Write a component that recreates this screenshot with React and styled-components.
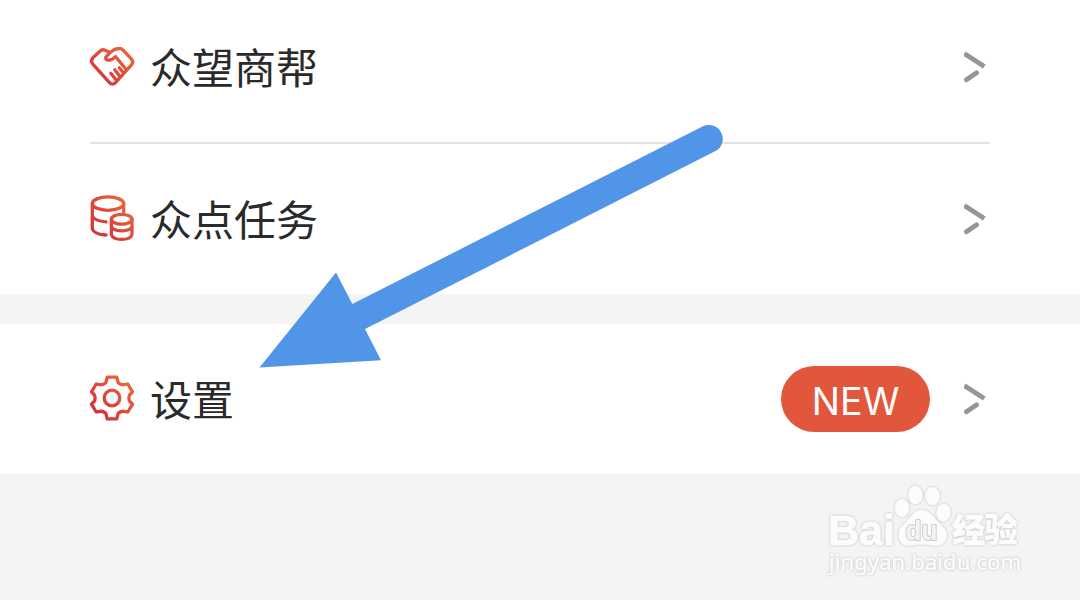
import React from 'react';
import styled, { createGlobalStyle } from 'styled-components';

const GlobalStyle = createGlobalStyle`
  * { box-sizing: border-box; }
  body {
    margin: 0;
    background: #f4f4f4;
    font-family: Roboto, "Noto Sans CJK SC", sans-serif;
  }
`;

const Page = styled.main`
  position: relative;
  width: 1080px;
  height: 600px;
  overflow: hidden;
  display: flex;
  flex-direction: column;
  gap: 30px;
`;

const Group = styled.section`
  background: #fff;
  padding: 0 90px;
`;

const Row = styled.div`
  display: flex;
  align-items: center;
  height: ${(p) => (p.$clipped ? 142 : 150)}px;
  padding-bottom: ${(p) => (p.$clipped ? 8 : 0)}px;
`;

const Divider = styled.div`
  height: 2px;
  background: #e2e2e2;
`;

const Icon = styled.svg`
  width: 44px;
  height: 44px;
  margin-bottom: 2px;
  flex: none;
  overflow: visible;
  fill: none;
  stroke-width: 3.3;
  stroke-linecap: round;
  stroke-linejoin: round;
`;

const Label = styled.span`
  flex: 1;
  margin: 0 0 2px 16px;
  font-family: "Noto Sans CJK SC", sans-serif;
  font-size: 42px;
  line-height: 60px;
  color: #2a2a2a;
`;

const Badge = styled.span`
  width: 149px;
  height: 66px;
  margin-right: 34px;
  padding-top: 3px;
  border-radius: 33px;
  background: #e2573b;
  color: #fff;
  font: 400 37.5px/66px Inter, sans-serif;
  text-align: center;
`;

const Chevron = styled.svg`
  width: 22px;
  height: 32px;
  margin-right: 4px;
  flex: none;
  fill: none;
  stroke: #969696;
  stroke-width: 4.8;
`;

const Arrow = styled.svg`
  position: absolute;
  left: 250px;
  top: 110px;
  width: 490px;
  height: 270px;
  fill: #5195e9;
`;

const Watermark = styled.div`
  position: absolute;
  left: 827px;
  top: 482px;
  width: 200px;
  height: 100px;
`;

const Mark = styled.svg`
  display: block;
  width: 200px;
  height: 100px;
  overflow: visible;
  fill: #fcfcfc;
  stroke: #fcfcfc;
  stroke-width: 0.5;
  paint-order: stroke;
  stroke-linejoin: round;
  filter: drop-shadow(0 0 1px #b8b8b8);
`;

function Warm({ id }) {
  return (
    <defs>
      <linearGradient id={id} gradientUnits="userSpaceOnUse" x1="38" y1="6" x2="8" y2="36">
        <stop offset="0" stopColor="#ea663c" />
        <stop offset="1" stopColor="#d53438" />
      </linearGradient>
    </defs>
  );
}

function Handshake() {
  return (
    <Icon viewBox="0 -0.8 44 44" stroke="url(#shake)">
      <Warm id="shake" />
      <path d="M18.5 7 L15 5.4 Q12.7 4.3 10.6 6 L2.8 13 Q.2 16 2.6 19 L19.5 37.8 Q22.5 41 25.5 37.8 L41.5 20 Q44 17 41.3 14 L33 5.2 Q31 3.2 28.3 3.7 Q23.8 4.3 21.2 6.8 L16.2 11.8 Q14.7 14.2 17.2 15.2 Q21.4 16.2 25.5 11.7 L35.5 24" />
      <path d="M29.3 23 L33.6 28.2 M24.8 25 L29.8 31.6 M20.8 28.4 L26 35" />
    </Icon>
  );
}

function Coins() {
  return (
    <Icon viewBox="0 0 44 44" stroke="url(#coins)">
      <Warm id="coins" />
      <ellipse cx="18" cy="7.6" rx="15.7" ry="6.7" />
      <path d="M2.3 7.6 V33 Q4.3 38.4 16 39 M33.7 7.6 V16 M2.3 20 Q4.3 25 16 25.8" />
      <ellipse cx="31.7" cy="23.2" rx="10.3" ry="4.9" />
      <path d="M21.4 23.2 V38.6 Q22.8 43.4 31.7 43.4 Q40.6 43.4 42 38.6 V23.2 M21.4 30.5 Q22.8 34.8 31.7 34.8 Q40.6 34.8 42 30.5" />
    </Icon>
  );
}

function Gear() {
  return (
    <Icon viewBox="0 0 44 44" stroke="url(#gear)">
      <Warm id="gear" />
      <path d="M17.2 1.2 H26.8 L28.2 6.8 Q30.8 9.1 34 8.7 L37.8 8 L42.5 15.8 L39.5 19 Q38.2 22 39.5 25 L42.5 28.2 L37.8 36 L34 35.3 Q30.8 34.9 28.2 37.2 L26.8 42.8 H17.2 L15.8 37.2 Q13.2 34.9 10 35.3 L6.2 36 L1.5 28.2 L4.5 25 Q5.8 22 4.5 19 L1.5 15.8 L6.2 8 L10 8.7 Q13.2 9.1 15.8 6.8 Z" />
      <circle cx="22" cy="22" r="7.8" />
    </Icon>
  );
}

function Next() {
  return (
    <Chevron viewBox="0 0 22 32">
      <path d="M.3 2.5 L20.3 15.5" />
      <path d="M2.4 28.7 L12.6 21.8" strokeLinecap="round" />
    </Chevron>
  );
}

function MenuRow({ icon, label, badge, clipped }) {
  return (
    <Row $clipped={clipped}>
      {icon}
      <Label>{label}</Label>
      {badge && <Badge>{badge}</Badge>}
      <Next />
    </Row>
  );
}

function BaiduMark() {
  return (
    <Watermark>
      <Mark viewBox="0 0 200 100">
        <text x="1" y="62.5" fontFamily="Liberation Sans, sans-serif" fontWeight="700" fontSize="43" textLength="67" lengthAdjust="spacingAndGlyphs" strokeWidth="1">Bai</text>
        <ellipse cx="75" cy="26" rx="7.2" ry="9" />
        <ellipse cx="88.5" cy="13" rx="7" ry="9.3" />
        <ellipse cx="105.5" cy="14" rx="7.3" ry="9" />
        <ellipse cx="116.5" cy="30.5" rx="7" ry="8.8" />
        <path d="M95 28 C86 28 84 36 77 42 C68 49 71 64 82 63.5 C90 62 101 62 108 63.5 C120 65 124 51 114 43 C107 37 104 28 95 28 Z" />
        <text x="78.5" y="58" fontFamily="Liberation Sans, sans-serif" fontWeight="700" fontSize="27" textLength="32" lengthAdjust="spacingAndGlyphs" style={{ fill: '#f4f4f4', stroke: '#d0d0d0', strokeWidth: 2.2 }}>du</text>
        <text x="125" y="60" fontFamily="Noto Sans CJK SC, sans-serif" fontWeight="900" fontSize="33.5" textLength="66">经验</text>
        <text x="2" y="88" fontFamily="Noto Sans, sans-serif" fontSize="22" textLength="192">jingyan.baidu.com</text>
      </Mark>
    </Watermark>
  );
}

export default function App() {
  return (
    <>
      <GlobalStyle />
      <Page>
        <Group>
          <MenuRow clipped icon={<Handshake />} label="众望商帮" />
          <Divider />
          <MenuRow icon={<Coins />} label="众点任务" />
        </Group>
        <Group>
          <MenuRow icon={<Gear />} label="设置" badge="NEW" />
        </Group>
        <Arrow viewBox="250 110 490 270">
          <path d="M259.5 367.5 L336 272.5 L352.3 304 L703.5 126 A14 14 0 0 1 717 150.3 L365 329 L381 360.3 Z" />
        </Arrow>
        <BaiduMark />
      </Page>
    </>
  );
}
